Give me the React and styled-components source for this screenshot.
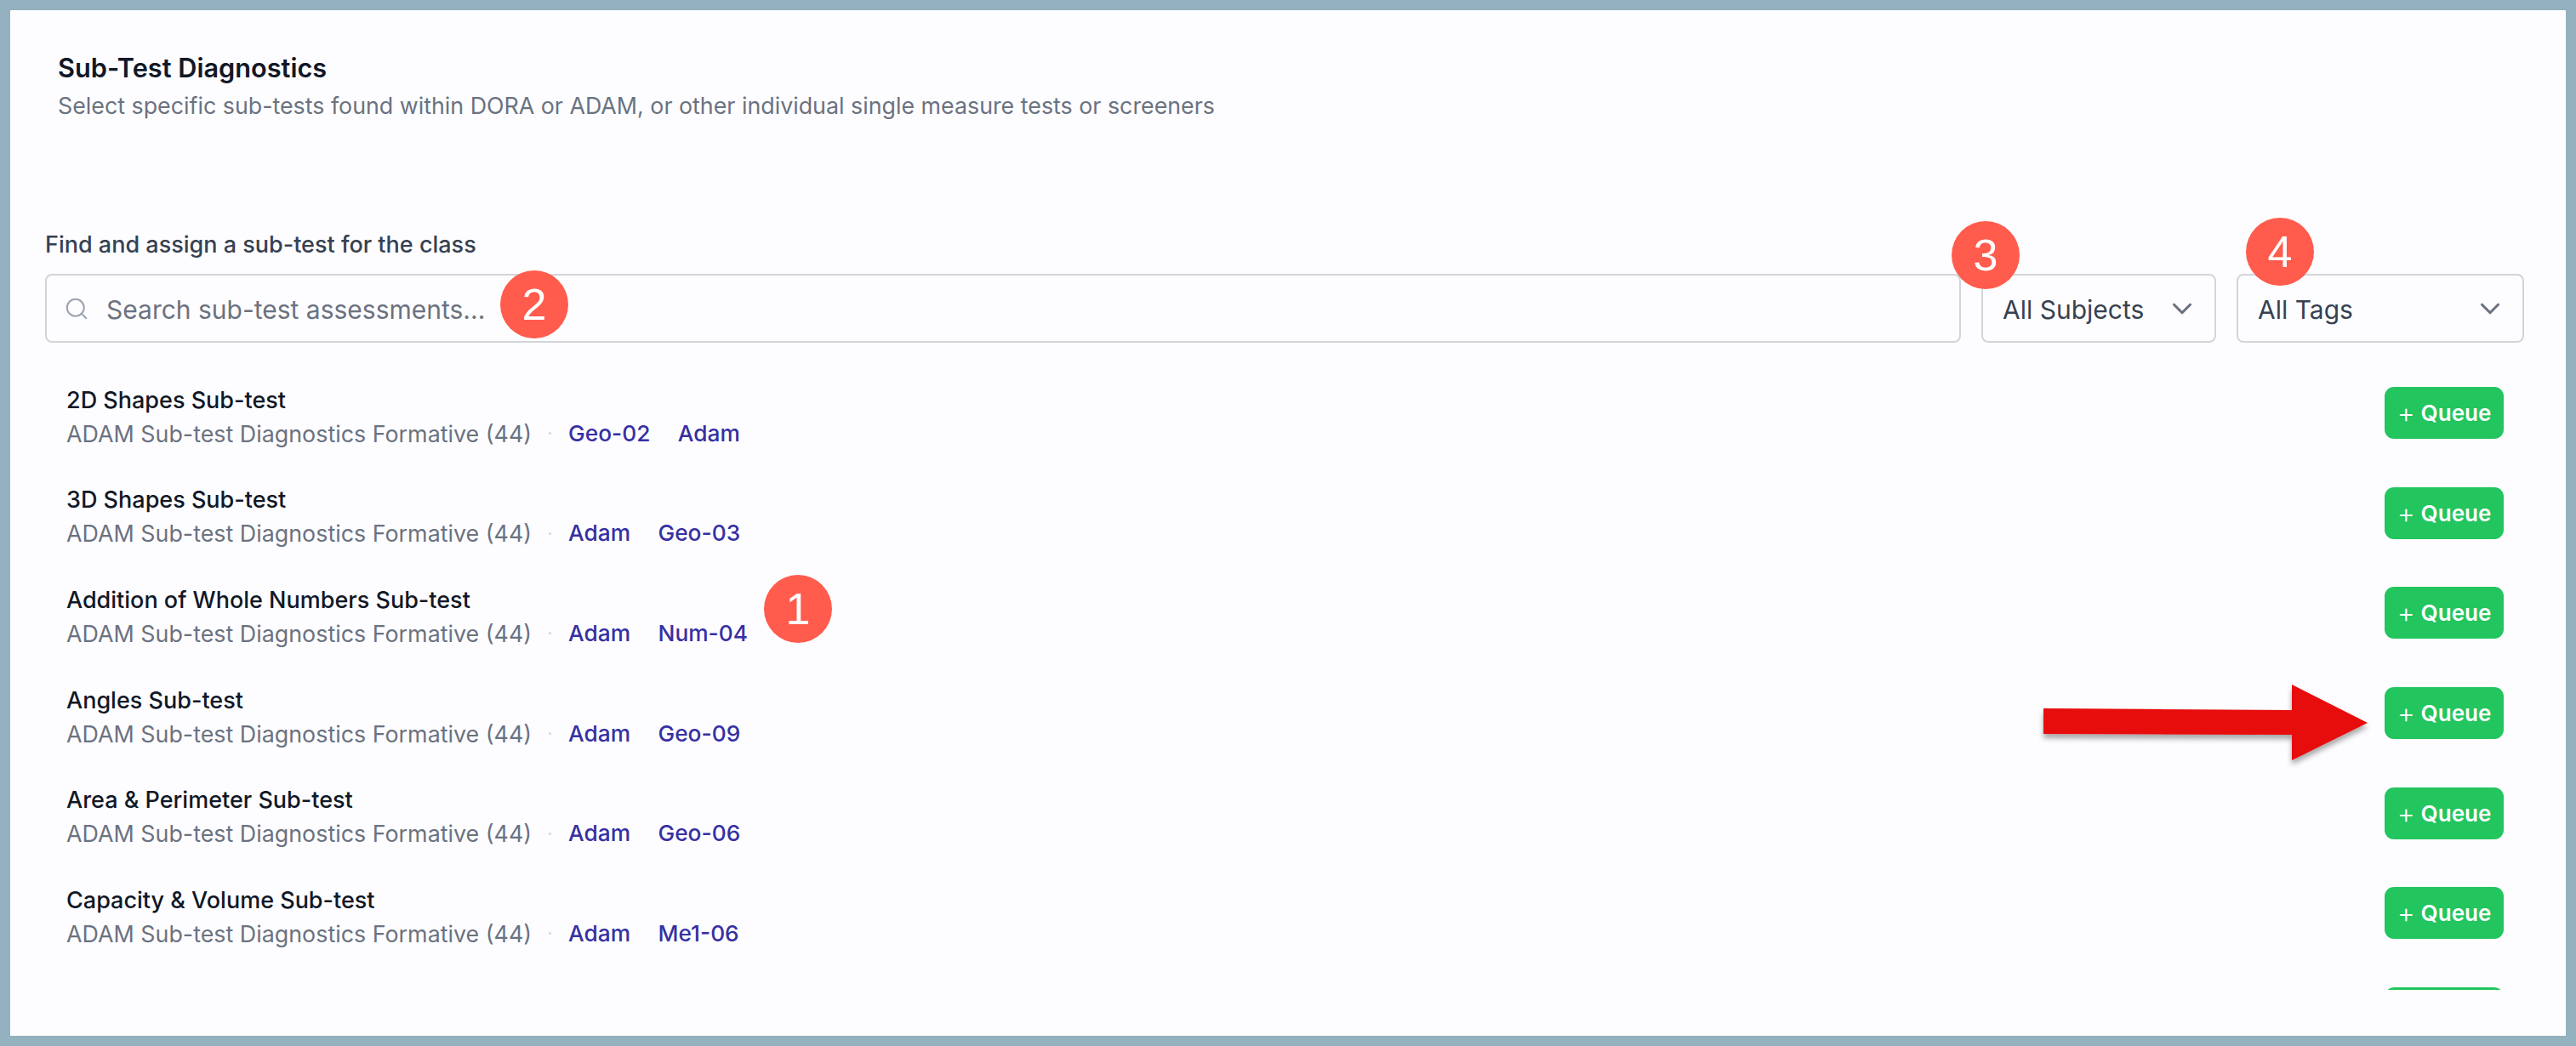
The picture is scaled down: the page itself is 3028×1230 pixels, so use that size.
import React from 'react'
import styled, { createGlobalStyle } from 'styled-components'
import { Search, ChevronDown } from 'lucide-react'

const rows = [
  { name: '2D Shapes Sub-test', tags: ['Geo-02', 'Adam'] },
  { name: '3D Shapes Sub-test', tags: ['Adam', 'Geo-03'] },
  { name: 'Addition of Whole Numbers Sub-test', tags: ['Adam', 'Num-04'] },
  { name: 'Angles Sub-test', tags: ['Adam', 'Geo-09'] },
  { name: 'Area & Perimeter Sub-test', tags: ['Adam', 'Geo-06'] },
  { name: 'Capacity & Volume Sub-test', tags: ['Adam', 'Me1-06'] },
  { name: 'Clock Reading', tags: ['Adam', 'Me1-02'] },
]

const badges = [
  { n: 1, x: 938, y: 716 },
  { n: 2, x: 628, y: 358 },
  { n: 3, x: 2334, y: 300 },
  { n: 4, x: 2680, y: 296 },
]

function App() {
  return (
    <Frame>
      <GlobalStyle />
      <Card>
        <Header>
          <Title>Sub-Test Diagnostics</Title>
          <Subtitle>Select specific sub-tests found within DORA or ADAM, or other individual single measure tests or screeners</Subtitle>
        </Header>
        <Finder>
          <Label>Find and assign a sub-test for the class</Label>
          <Filters>
            <SearchBox>
              <Search size={30} strokeWidth={1.6} color="#9ca3af" />
              <Placeholder>Search sub-test assessments...</Placeholder>
            </SearchBox>
            <Select $width={276}>
              <span>All Subjects</span>
              <ChevronDown size={38} strokeWidth={2} color="#6b7280" />
            </Select>
            <Select $width={338}>
              <span>All Tags</span>
              <ChevronDown size={38} strokeWidth={2} color="#6b7280" />
            </Select>
          </Filters>
        </Finder>
        <List>
          {rows.map(r => (
            <Row key={r.name}>
              <RowText>
                <RowName>{r.name}</RowName>
                <RowMeta>
                  <span>ADAM Sub-test Diagnostics Formative (44)</span>
                  <Dot />
                  {r.tags.map(t => <Tag key={t}>{t}</Tag>)}
                </RowMeta>
              </RowText>
              <QueueBtn><PlusMark>+</PlusMark>Queue</QueueBtn>
            </Row>
          ))}
        </List>
      </Card>

      <Arrow viewBox="0 0 400 110" width="400" height="110">
        <defs>
          <filter id="arrowShadow" x="-5%" y="-20%" width="110%" height="150%">
            <feDropShadow dx="0" dy="5" stdDeviation="3" floodColor="#000" floodOpacity="0.35" />
          </filter>
        </defs>
        <path d="M2 28 L294 30 L294 0 L383 45 L294 89 L294 59 L2 58 Z" fill="#e70808" filter="url(#arrowShadow)" />
      </Arrow>
      {badges.map(b => <Badge key={b.n} $x={b.x} $y={b.y}>{b.n}</Badge>)}
    </Frame>
  )
}

const GlobalStyle = createGlobalStyle`
  html, body { margin: 0; padding: 0; }
  body { font-family: Inter, "Liberation Sans", sans-serif; }
`

const Frame = styled.div`
  position: relative;
  width: 3028px;
  height: 1230px;
  box-sizing: border-box;
  padding: 12px;
  background-color: #94b1bf;
  overflow: hidden;
`

const Card = styled.div`
  height: 100%;
  box-sizing: border-box;
  background-color: #fdfdff;
  padding: 0 49px 0 41px;
`

const Header = styled.div`
  padding: 48px 0 0 15px;
  height: 258px;
  box-sizing: border-box;
`

const Title = styled.h1`
  margin: 0;
  font-size: 30.7px;
  line-height: 40px;
  font-weight: 600;
  color: #111827;
`

const Subtitle = styled.p`
  margin: 6px 0 0;
  font-size: 26.8px;
  line-height: 36px;
  color: #6b7280;
`

const Finder = styled.div`
  display: flex;
  flex-direction: column;
`

const Label = styled.div`
  font-size: 27px;
  line-height: 36px;
  font-weight: 500;
  color: #374151;
  margin-bottom: 16px;
`

const Filters = styled.div`
  display: flex;
  gap: 24px;
  height: 81px;
`

const SearchBox = styled.div`
  flex: 1;
  display: flex;
  align-items: center;
  gap: 20px;
  padding-left: 20px;
  border: 2px solid #d1d5db;
  border-radius: 8px;
`

const Placeholder = styled.span`
  font-size: 30px;
  padding-top: 2px;
  color: #6b7280;
`

const Select = styled.div`
  width: ${props => props.$width}px;
  box-sizing: border-box;
  display: flex;
  align-items: center;
  justify-content: space-between;
  padding: 0 19px 0 23px;
  border: 2px solid #d1d5db;
  border-radius: 8px;
  font-size: 30px;
  color: #374151;

  span {
    padding-top: 2px;
  }
`

const List = styled.div`
  height: 761px;
  box-sizing: border-box;
  overflow: hidden;
  padding: 24px 24px 0 25px;
`

const Row = styled.div`
  height: 117.6px;
  display: flex;
  align-items: center;
  justify-content: space-between;
`

const RowText = styled.div`
  padding-top: 11px;
`

const RowName = styled.div`
  font-size: 27px;
  line-height: 36px;
  font-weight: 500;
  color: #111827;
`

const RowMeta = styled.div`
  display: flex;
  align-items: center;
  margin-top: 1px;
  font-size: 26.85px;
  line-height: 40px;
  color: #6b7280;
`

const Dot = styled.i`
  width: 3px;
  height: 3px;
  border-radius: 50%;
  background-color: #d1d5db;
  margin: 0 20px;
`

const Tag = styled.span`
  color: #3730a3;
  font-size: 26.3px;
  font-weight: 500;
  margin-right: 32.5px;
`

const QueueBtn = styled.button`
  width: 140px;
  height: 61px;
  display: flex;
  align-items: center;
  justify-content: center;
  gap: 7px;
  border: 0;
  border-radius: 11px;
  background-color: #22c55e;
  color: #fff;
  font-family: inherit;
  font-size: 26px;
  font-weight: 600;
  padding: 0;
`

const PlusMark = styled.span`
  font-size: 32px;
  font-weight: 300;
`

const Arrow = styled.svg`
  position: absolute;
  left: 2400px;
  top: 805px;
  overflow: visible;
`

const Badge = styled.div`
  position: absolute;
  left: ${props => props.$x - 40}px;
  top: ${props => props.$y - 40}px;
  width: 80px;
  height: 80px;
  border-radius: 50%;
  background-color: #ff5c4d;
  color: #fff;
  font-family: "Liberation Sans", sans-serif;
  font-size: 52px;
  display: flex;
  align-items: center;
  justify-content: center;
`

export default App
